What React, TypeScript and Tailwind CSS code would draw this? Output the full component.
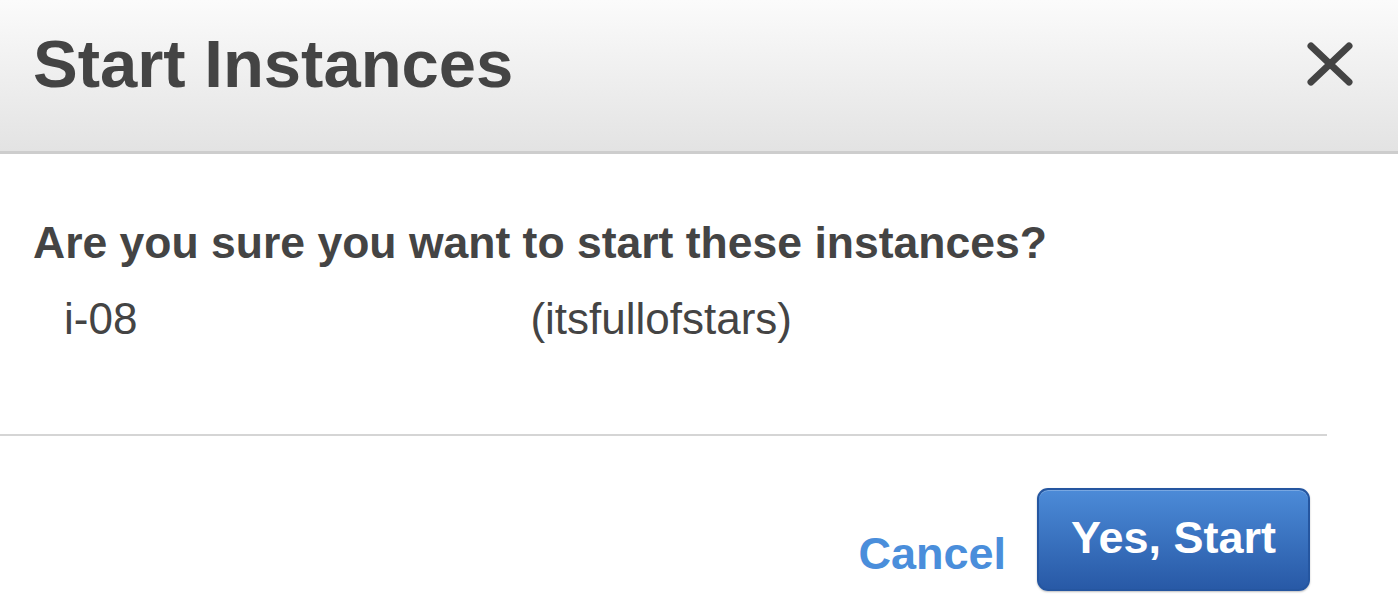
import React from 'react';

const font = { fontFamily: '"Liberation Sans", Arial, Helvetica, sans-serif' };

const CloseIcon: React.FC = () => (
  <svg width="48" height="44" viewBox="0 0 48 44" aria-hidden="true">
    <path d="M5 4 L43 40 M43 4 L5 40" stroke="#444" strokeWidth="7" strokeLinecap="round" fill="none" />
  </svg>
);

const App: React.FC = () => {
  return (
    <div className="w-[1398px] h-[604px] overflow-hidden bg-white text-[#444]" style={font}>
      <div className="h-[154px] bg-gradient-to-b from-[#fbfbfb] to-[#e3e3e3] border-b-[3px] border-[#cdcdcd] pt-[28px]">
        <div className="flex items-center justify-between h-[72px] pl-[33px] pr-[44px]">
          <h1 className="text-[67px] leading-[72px] font-bold">Start Instances</h1>
          <button className="flex items-center">
            <CloseIcon />
          </button>
        </div>
      </div>

      <div className="pl-[33px] pt-[64px]">
        <p className="text-[44.5px] leading-[50px] font-bold">Are you sure you want to start these instances?</p>
        <div className="flex mt-[26px] ml-[31px] text-[44px] leading-[50px]">
          <span>i-08</span>
          <span className="ml-[393px]">(itsfullofstars)</span>
        </div>
      </div>

      <div className="mt-[90px] w-[1327px] h-[2px] bg-[#d5d5d5]"></div>

      <div className="flex justify-end items-end gap-[31px] pr-[88px] pt-[52px]">
        <a className="text-[45px] leading-[44px] font-bold text-[#4a8edb] mb-[15px] cursor-pointer">Cancel</a>
        <button className="w-[273px] h-[103px] rounded-[11px] border-2 border-[#2556a0] bg-gradient-to-b from-[#4c8bd8] to-[#2859a6] shadow-[inset_0_1px_0_rgba(255,255,255,0.25),0_1px_2px_rgba(0,0,0,0.25)] text-white text-[45px] font-bold leading-none pb-[4px]">
          Yes, Start
        </button>
      </div>
    </div>
  );
};

export default App;
